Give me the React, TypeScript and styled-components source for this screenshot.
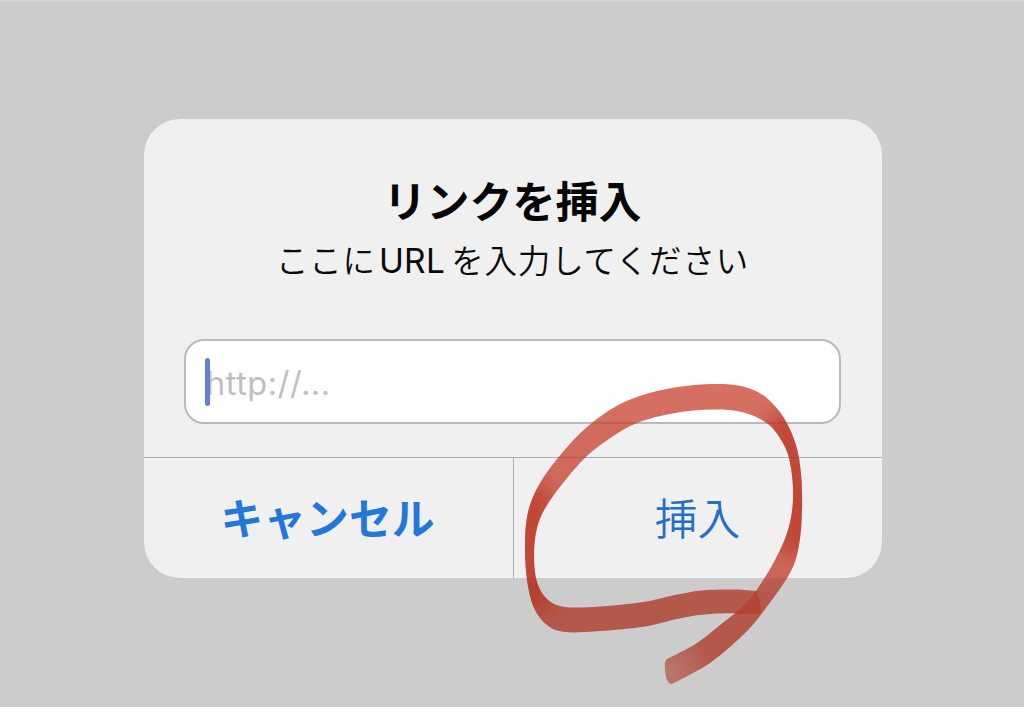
import React from 'react'
import styled, { createGlobalStyle } from 'styled-components'

const GlobalStyle = createGlobalStyle`
  * {
    box-sizing: border-box;
  }

  body {
    margin: 0;
    font-family: Inter, 'Noto Sans CJK JP', sans-serif;
  }
`

const Backdrop = styled.main`
  position: relative;
  display: flex;
  justify-content: center;
  align-items: flex-start;
  height: 707px;
  padding: 117px 0 0 2px;
  border-top: 2px solid #d6d6d6;
  border-bottom: 1px solid #d3d3d3;
  background: #ccc;
  overflow: hidden;
`

const Dialog = styled.section`
  display: flex;
  flex-direction: column;
  width: 738px;
  height: 459px;
  border-radius: 36px;
  background: #f0f0f0;
  overflow: hidden;
`

const Body = styled.div`
  display: flex;
  flex-direction: column;
  align-items: center;
  height: 338px;
  padding: 51px 41px 0 40px;
`

const Title = styled.h1`
  margin: 0;
  color: #050505;
  font-size: 43px;
  font-weight: 700;
  line-height: 64px;
  white-space: nowrap;
`

const Message = styled.p`
  margin: 0;
  color: #0a0a0a;
  font-size: 32.5px;
  line-height: 54px;
  letter-spacing: 0.8px;
  white-space: nowrap;
  font-weight: 350;

  span {
    margin: 0 6px 0 3px;
    font-size: 33.5px;
    font-weight: 400;
    letter-spacing: 0.3px;
  }
`

const Field = styled.label`
  display: flex;
  align-items: center;
  width: 657px;
  height: 85px;
  margin-top: 50px;
  padding-left: 19px;
  border: 2px solid #bababa;
  border-radius: 20px;
  background: #fff;
`

const Caret = styled.span`
  width: 5px;
  height: 48px;
  border-radius: 3px;
  background: #6580d4;
  z-index: 1;
`

const Placeholder = styled.span`
  padding-top: 4px;
  margin-left: -4px;
  color: #bfbfbf;
  font-size: 32.5px;
  line-height: 48px;
  letter-spacing: 0.55px;
`

const Actions = styled.div`
  display: grid;
  grid-template-columns: 370px 1fr;
  height: 121px;
  border-top: 1px solid #acacac;
`

const Action = styled.button<{ $bold?: boolean }>`
  padding: 4px ${({ $bold }) => ($bold ? 2 : 1)}px 0 0;
  border: 0;
  border-right: ${({ $bold }) => ($bold ? '1px solid #b0b0b0' : '0')};
  background: none;
  color: ${({ $bold }) => ($bold ? '#2377d9' : '#2470c7')};
  font-family: inherit;
  font-size: 42.8px;
  font-weight: ${({ $bold }) => ($bold ? 700 : 350)};
  line-height: 60px;
`

const Marker = styled.svg`
  position: absolute;
  top: -2px;
  left: 0;
  pointer-events: none;
`

type Point = [number, number]

const innerEdge: Point[] = [
  [757, 591], [735, 589.5], [706, 590], [680, 594], [643, 602], [600, 606.5],
  [565, 607], [547, 599], [537, 582], [534, 557], [537, 528], [549, 502],
  [580, 463], [606, 441], [637, 423], [675, 413], [711, 409.5], [742, 412],
  [768, 424], [784, 445], [791, 468], [793, 500], [788, 530], [775, 560],
  [756, 591], [743, 607], [725, 621], [697, 643], [667, 659],
]

const outerEdge: Point[] = [
  [672, 684], [710, 663], [743, 635], [763, 612], [790, 573], [799, 545],
  [802, 510], [801, 474], [796, 445], [784, 418], [768, 399], [752, 389.5],
  [730, 384.5], [695, 385], [657, 391], [620, 404], [587, 427], [562, 453],
  [540, 483], [528, 512], [525, 545], [527, 580], [534, 608], [547, 625],
  [565, 632], [600, 631], [645, 626.5], [677, 619], [704, 614.5], [740, 613],
  [760, 614],
]

// Catmull-Rom through the points, written as cubic segments
const smooth = (points: Point[]) =>
  points.slice(1).map(([x, y], i) => {
    const [x0, y0] = points[Math.max(i - 1, 0)]
    const [x1, y1] = points[i]
    const [x3, y3] = points[Math.min(i + 2, points.length - 1)]
    return `C${x1 + (x - x0) / 6} ${y1 + (y - y0) / 6} ${x - (x3 - x1) / 6} ${y - (y3 - y1) / 6} ${x} ${y}`
  }).join(' ')

const markerPath = `M${innerEdge[0].join(' ')} ${smooth(innerEdge)} Q664 661 665 670 Q666 684 672 684 ${smooth(outerEdge)} Q763 604 757 591Z`

const RedCircle: React.FC = () => (
  <Marker width="1024" height="707" viewBox="0 0 1024 707" aria-hidden="true">
    <defs>
      <clipPath id="marker">
        <path d={markerPath} />
      </clipPath>
      <filter id="soft" filterUnits="userSpaceOnUse" x="480" y="340" width="380" height="360">
        <feGaussianBlur stdDeviation="9" />
      </filter>
      <radialGradient id="fade" gradientUnits="userSpaceOnUse" cx="667" cy="674" r="45">
        <stop offset="0" stopColor="#fff" stopOpacity="0.72" />
        <stop offset="1" stopColor="#fff" />
      </radialGradient>
      <linearGradient id="ink" gradientUnits="userSpaceOnUse" x1="0" y1="384" x2="0" y2="640">
        <stop offset="0" stopColor="#c53826" stopOpacity="0.72" />
        <stop offset="0.7" stopColor="#c03320" stopOpacity="0.72" />
        <stop offset="0.85" stopColor="#aa2e1c" stopOpacity="0.73" />
      </linearGradient>
      <mask id="tail" maskUnits="userSpaceOnUse" x="0" y="0" width="1024" height="707">
        <rect width="1024" height="707" fill="url(#fade)" />
      </mask>
    </defs>
    <path d={markerPath} fill="url(#ink)" mask="url(#tail)" />
    <g clipPath="url(#marker)">
      <g filter="url(#soft)" fill="none" stroke="#b52c18" strokeLinecap="round" strokeOpacity="0.55">
        <path d="M536 596 Q527 545 535 500" strokeWidth="34" />
        <path d="M784 428 Q805 490 795 540" strokeWidth="34" />
      </g>
    </g>
    <path d="M756 591 Q763 604 760 614 L734 614 Q747 604 756 591Z" fill="#b52c18" fillOpacity="0.45" />
  </Marker>
)

const App: React.FC = () => (
  <>
    <GlobalStyle />
    <Backdrop>
      <Dialog role="dialog" aria-labelledby="title">
        <Body>
          <Title id="title">リンクを挿入</Title>
          <Message>ここに<span>URL</span>を入力してください</Message>
          <Field>
            <Caret />
            <Placeholder>http://...</Placeholder>
          </Field>
        </Body>
        <Actions>
          <Action $bold>キャンセル</Action>
          <Action>挿入</Action>
        </Actions>
      </Dialog>
      <RedCircle />
    </Backdrop>
  </>
)

export default App
